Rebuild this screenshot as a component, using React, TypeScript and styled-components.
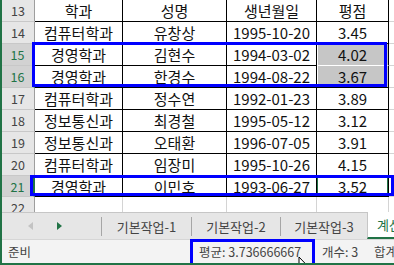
import styled, { createGlobalStyle } from "styled-components";

const GlobalStyle = createGlobalStyle`
  body {
    margin: 0;
    font-family: "Noto Sans CJK KR", "Noto Sans", sans-serif;
    background: #fff;
  }
`;

const GREEN = "#217346";
const BLUE = "#0000ff";

const Window = styled("div")`
  position: relative;
  width: 394px;
  height: 265px;
  box-sizing: border-box;
  border-left: 2px solid ${GREEN};
  border-bottom: 2px solid ${GREEN};
  display: flex;
  flex-direction: column;
  overflow: hidden;
`;

const Sheet = styled("div")`
  height: 212px;
  flex: 0 0 212px;
  overflow: hidden;
  display: grid;
  grid-template-columns: 33px 88px 104px 90px 72px 1fr;
  grid-template-rows: repeat(8, 22px) 21px 22px;
`;

interface RowHeadProps {
  $picked?: boolean;
}

const RowHead = styled("div")<RowHeadProps>`
  box-sizing: border-box;
  display: flex;
  align-items: center;
  justify-content: center;
  font-size: 12.5px;
  color: ${(p) => (p.$picked ? GREEN : "#444")};
  background: ${(p) => (p.$picked ? "#d2d2d2" : "#e6e6e6")};
  border-bottom: 1px solid #c8c8c8;
  border-right: ${(p) => (p.$picked ? `2px solid ${GREEN}` : "1px solid #9e9e9e")};
`;

interface CellProps {
  $sel?: boolean;
  $active?: boolean;
  $plain?: boolean;
  $joinBelow?: boolean;
}

const Cell = styled("div")<CellProps>`
  box-sizing: border-box;
  display: flex;
  align-items: center;
  justify-content: center;
  font-size: 15px;
  color: #111;
  white-space: nowrap;
  background: ${(p) => (p.$sel ? "#c6c6c6" : "#fff")};
  border-right: 1px solid ${(p) => (p.$plain ? "#d4d4d4" : "#000")};
  border-bottom: 1px solid
    ${(p) => (p.$joinBelow ? "#fff" : p.$plain ? "#d4d4d4" : "#000")};
  box-shadow: ${(p) =>
    p.$active
      ? `inset 0 0 0 1px ${GREEN}`
      : p.$sel
      ? "inset 1px 0 0 #fff"
      : "none"};
`;

const Edge = styled("div")`
  box-sizing: border-box;
  border-bottom: 1px solid #d4d4d4;
`;

const TabBar = styled("div")`
  flex: 0 0 26px;
  box-sizing: border-box;
  display: flex;
  align-items: stretch;
  background: #e6e6e6;
  border-top: 1px solid #c6c6c6;
  border-bottom: 1px solid #d6d6d6;
`;

const Nav = styled("div")`
  flex: 0 0 99px;
  display: flex;
  align-items: center;
  padding-left: 26px;
  gap: 24px;
  box-sizing: border-box;
`;

interface TabProps {
  $w?: number;
}

const Tab = styled("div")<TabProps>`
  box-sizing: border-box;
  flex: 0 0 ${(p) => p.$w}px;
  display: flex;
  align-items: center;
  justify-content: center;
  white-space: nowrap;
  font-size: 13px;
  color: #444;
  border-left: 1px solid #a6a6a6;
  margin: 4px 0 3px 0;
`;

const CurrentTab = styled("div")`
  box-sizing: border-box;
  flex: 1 0 auto;
  display: flex;
  align-items: center;
  padding-left: 9px;
  white-space: nowrap;
  font-size: 13px;
  color: ${GREEN};
  background: #fff;
  border-left: 1px solid #c6c6c6;
  border-bottom: 2px solid ${GREEN};
  margin-top: -1px;
`;

const StatusBar = styled("div")`
  flex: 1;
  display: flex;
  align-items: center;
  background: #f3f3f3;
  font-size: 12.5px;
  color: #444;
  white-space: nowrap;
`;

const Ready = styled("span")`
  flex: 0 0 188px;
  padding-left: 6px;
  box-sizing: border-box;
`;

interface StatProps {
  $w: number;
}

const Stat = styled("span")<StatProps>`
  flex: 0 0 ${(p) => p.$w}px;
  padding-left: 9px;
  box-sizing: border-box;
`;

interface MarkProps {
  $x: number;
  $y: number;
  $w: number;
  $h: number;
}

// blue annotation rectangles drawn over the screenshot
const Mark = styled("div")<MarkProps>`
  position: absolute;
  left: ${(p) => p.$x}px;
  top: ${(p) => p.$y}px;
  width: ${(p) => p.$w}px;
  height: ${(p) => p.$h}px;
  box-sizing: border-box;
  border: 3px solid ${BLUE};
  pointer-events: none;
`;

const Pointer = styled("svg")`
  position: absolute;
  left: 296px;
  top: 256px;
`;

const ROWS = [
  { n: 13, cells: ["학과", "성명", "생년월일", "평점"] },
  { n: 14, cells: ["컴퓨터학과", "유창상", "1995-10-20", "3.45"] },
  { n: 15, cells: ["경영학과", "김현수", "1994-03-02", "4.02"], sel: true },
  { n: 16, cells: ["경영학과", "한경수", "1994-08-22", "3.67"], sel: true },
  { n: 17, cells: ["컴퓨터학과", "정수연", "1992-01-23", "3.89"] },
  { n: 18, cells: ["정보통신과", "최경철", "1995-05-12", "3.12"] },
  { n: 19, cells: ["정보통신과", "오태환", "1996-07-05", "3.91"] },
  { n: 20, cells: ["컴퓨터학과", "임장미", "1995-10-26", "4.15"] },
  { n: 21, cells: ["경영학과", "이민호", "1993-06-27", "3.52"], active: true },
];

const TABS = [
  { name: "기본작업-1", w: 90 },
  { name: "기본작업-2", w: 89 },
  { name: "기본작업-3", w: 87 },
];

function App() {
  return (
    <>
      <GlobalStyle />
      <Window>
        <Sheet>
          {ROWS.map((row) => [
            <RowHead key={`h${row.n}`} $picked={row.sel || row.active}>
              {row.n}
            </RowHead>,
            ...row.cells.map((text, i) => (
              <Cell
                key={`${row.n}-${i}`}
                $sel={row.sel && i === 3}
                $joinBelow={row.n === 15 && i === 3}
                $active={row.active && i === 3}
              >
                {text}
              </Cell>
            )),
            <Edge key={`e${row.n}`} />,
          ])}
          <RowHead>22</RowHead>
          <Cell $plain />
          <Cell $plain />
          <Cell $plain />
          <Cell $plain />
          <Edge />
        </Sheet>

        <TabBar>
          <Nav>
            <svg width="5" height="8" viewBox="0 0 5 8">
              <polygon points="5,0 0,4 5,8" fill="#c3c3c3" />
            </svg>
            <svg width="5" height="8" viewBox="0 0 5 8">
              <polygon points="0,0 5,4 0,8" fill={GREEN} />
            </svg>
          </Nav>
          {TABS.map((t) => (
            <Tab key={t.name} $w={t.w}>
              {t.name}
            </Tab>
          ))}
          <CurrentTab>계산작업</CurrentTab>
        </TabBar>

        <StatusBar>
          <Ready>준비</Ready>
          <Stat $w={123}>평균: 3.736666667</Stat>
          <Stat $w={52}>개수: 3</Stat>
          <Stat $w={80}>합계: 11.21</Stat>
        </StatusBar>

        <Mark $x={30} $y={42} $w={355} $h={45} />
        <Mark $x={28} $y={175} $w={364} $h={21} />
        <Mark $x={188} $y={239} $w={125} $h={27} />

        <Pointer width="10" height="14" viewBox="0 0 10 14">
          <path
            d="M1 1 L1 12 L3.5 9.5 L5.5 13 L7 12.3 L5.2 8.8 L8.5 8.8 Z"
            fill="#fff"
            stroke="#000"
            strokeWidth="1"
          />
        </Pointer>
      </Window>
    </>
  );
}

export default App;
